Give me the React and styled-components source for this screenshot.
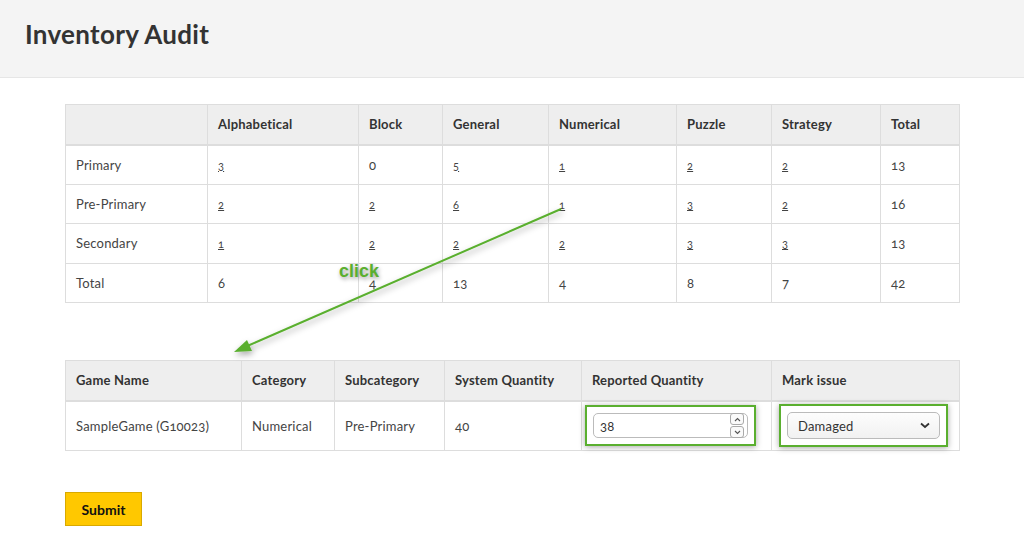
import React from "react";
import styled, { createGlobalStyle } from "styled-components";

const GlobalStyle = createGlobalStyle`
  html, body {
    margin: 0;
    padding: 0;
    background: #fff;
    font-family: "Lato", "Open Sans", sans-serif;
    color: #444;
  }
`;

const Page = styled.div`
  position: relative;
  width: 1024px;
  min-height: 541px;
`;

const Header = styled.header`
  height: 78px;
  background: #f4f4f4;
  border-bottom: 1px solid #e6e6e6;
  display: flex;
  align-items: center;
  padding-left: 25px;
  box-sizing: border-box;
`;

const Title = styled.h1`
  margin: 0 0 10px;
  font-size: 26px;
  font-weight: 700;
  color: #333;
  letter-spacing: 0.3px;
`;

const Content = styled.main`
  padding: 26px 65px 0 65px;
  display: flex;
  flex-direction: column;
`;

const Table = styled.table`
  border-collapse: collapse;
  width: 894px;
  font-size: 13px;
  margin-bottom: ${(p) => p.$gap || 0}px;
  table-layout: fixed;
  font-variant-numeric: oldstyle-nums;
`;

const Th = styled.th`
  background: #eeeeee;
  border: 1px solid #dddddd;
  border-bottom: 2px solid #dddddd;
  text-align: left;
  font-weight: 700;
  color: #333;
  height: 40px;
  padding: 0 10px;
  box-sizing: border-box;
  letter-spacing: 0.2px;
`;

const Td = styled.td`
  border: 1px solid #dddddd;
  height: ${(p) => p.$h || 39.5}px;
  padding: 0 10px;
  color: #444;
  box-sizing: border-box;
  vertical-align: middle;
  letter-spacing: 0.2px;
`;

const CountLink = styled.a`
  color: #444;
  text-decoration: underline;
  font-size: 11px;
`;

const Highlight = styled.div`
  display: inline-flex;
  border: 2px solid #5aaf2f;
  padding: 6px;
  box-shadow: 0 1px 6px rgba(0, 0, 0, 0.35);
`;

const NumberBox = styled.div`
  width: 155px;
  height: 25px;
  border: 1px solid #bbb;
  border-radius: 5px;
  background: #fff;
  display: flex;
  align-items: center;
  justify-content: space-between;
  padding: 0 3px 0 6px;
  box-sizing: border-box;
  font-size: 13px;
  color: #333;
`;

const Spinner = styled.div`
  display: flex;
  flex-direction: column;
  gap: 1px;
`;

const SpinBtn = styled.span`
  width: 12px;
  height: 10px;
  border: 1px solid #aaa;
  border-radius: 3px;
  display: flex;
  align-items: center;
  justify-content: center;
  background: #fafafa;
`;

const SelectBox = styled.div`
  width: 153px;
  height: 27px;
  border: 1px solid #bbb;
  border-radius: 5px;
  background: linear-gradient(#fdfdfd, #f1f1f1);
  display: flex;
  align-items: center;
  justify-content: space-between;
  padding: 0 9px 0 10px;
  box-sizing: border-box;
  font-size: 13px;
  color: #333;
`;

const Submit = styled.button`
  margin-top: 41px;
  align-self: flex-start;
  width: 77px;
  height: 34px;
  background: #ffc800;
  border: 1px solid #d9a900;
  font-family: "Lato", sans-serif;
  font-weight: 700;
  font-size: 14px;
  color: #111;
  cursor: pointer;
`;

const Annotation = styled.svg`
  position: absolute;
  left: 0;
  top: 0;
  pointer-events: none;
  overflow: visible;
`;

const ClickLabel = styled.span`
  position: absolute;
  left: 339px;
  top: 261px;
  font-family: "Liberation Sans", Arial, sans-serif;
  font-weight: 700;
  font-size: 18px;
  color: #5aaf2f;
  text-shadow: 1px 2px 4px rgba(0, 0, 0, 0.4);
`;

const Chevron = ({ up }) => (
  <svg width="7" height="5" viewBox="0 0 7 5">
    <path
      d={up ? "M1 4 L3.5 1.5 L6 4" : "M1 1 L3.5 3.5 L6 1"}
      fill="none"
      stroke="#555"
      strokeWidth="1.1"
    />
  </svg>
);

const cols1 = [142, 151, 84, 106, 128, 95, 109, 79];
const heads1 = ["", "Alphabetical", "Block", "General", "Numerical", "Puzzle", "Strategy", "Total"];
const rows1 = [
  ["Primary", "3", "0", "5", "1", "2", "2", "13"],
  ["Pre-Primary", "2", "2", "6", "1", "3", "2", "16"],
  ["Secondary", "1", "2", "2", "2", "3", "3", "13"],
  ["Total", "6", "4", "13", "4", "8", "7", "42"],
];

const cols2 = [176, 93, 110, 137, 190, 188];
const heads2 = ["Game Name", "Category", "Subcategory", "System Quantity", "Reported Quantity", "Mark issue"];

export default function App() {
  return (
    <Page>
      <GlobalStyle />
      <Header>
        <Title>Inventory Audit</Title>
      </Header>
      <Content>
        <Table $gap={57}>
          <colgroup>
            {cols1.map((w, i) => (
              <col key={i} style={{ width: w }} />
            ))}
          </colgroup>
          <thead>
            <tr>
              {heads1.map((h, i) => (
                <Th key={i}>{h}</Th>
              ))}
            </tr>
          </thead>
          <tbody>
            {rows1.map((r, ri) => (
              <tr key={ri}>
                {r.map((c, ci) => {
                  const linked = ri < 3 && ci > 0 && ci < 7 && c !== "0";
                  return (
                    <Td key={ci}>
                      {linked ? <CountLink href="#">{c}</CountLink> : c}
                    </Td>
                  );
                })}
              </tr>
            ))}
          </tbody>
        </Table>

        <Table>
          <colgroup>
            {cols2.map((w, i) => (
              <col key={i} style={{ width: w }} />
            ))}
          </colgroup>
          <thead>
            <tr>
              {heads2.map((h, i) => (
                <Th key={i}>{h}</Th>
              ))}
            </tr>
          </thead>
          <tbody>
            <tr>
              <Td $h={50}>SampleGame (G10023)</Td>
              <Td $h={50}>Numerical</Td>
              <Td $h={50}>Pre-Primary</Td>
              <Td $h={50}>40</Td>
              <Td $h={50} style={{ padding: "0 0 0 3px" }}>
                <Highlight>
                  <NumberBox>
                    38
                    <Spinner>
                      <SpinBtn>
                        <Chevron up />
                      </SpinBtn>
                      <SpinBtn>
                        <Chevron />
                      </SpinBtn>
                    </Spinner>
                  </NumberBox>
                </Highlight>
              </Td>
              <Td $h={50} style={{ padding: "0 0 0 7px" }}>
                <Highlight>
                  <SelectBox>
                    Damaged
                    <svg width="10" height="7" viewBox="0 0 10 7">
                      <path d="M1 1.5 L5 5 L9 1.5" fill="none" stroke="#333" strokeWidth="1.8" />
                    </svg>
                  </SelectBox>
                </Highlight>
              </Td>
            </tr>
          </tbody>
        </Table>

        <Submit>Submit</Submit>
      </Content>

      <Annotation width="1024" height="541">
        <defs>
          <filter id="sh" x="-20%" y="-20%" width="140%" height="140%">
            <feDropShadow dx="1" dy="3" stdDeviation="3" floodColor="#000" floodOpacity="0.35" />
          </filter>
        </defs>
        <g filter="url(#sh)">
          <line x1="561" y1="209" x2="245" y2="347" stroke="#5aaf2f" strokeWidth="2" />
          <polygon points="234,352 247,340 252,351" fill="#5aaf2f" />
        </g>
      </Annotation>
      <ClickLabel>click</ClickLabel>
    </Page>
  );
}
